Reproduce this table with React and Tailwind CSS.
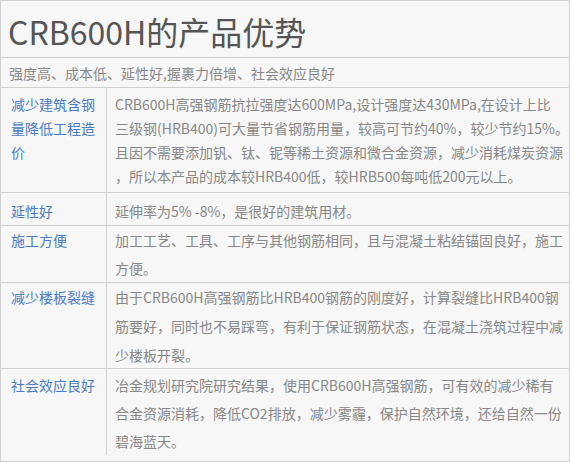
const rows = [
  {
    title: ['减少建筑含钢', '量降低工程造', '价'],
    lines: [
      'CRB600H高强钢筋抗拉强度达600MPa,设计强度达430MPa,在设计上比',
      '三级钢(HRB400)可大量节省钢筋用量，较高可节约40%，较少节约15%。',
      '且因不需要添加钒、钛、铌等稀土资源和微合金资源，减少消耗煤炭资源',
      '，所以本产品的成本较HRB400低，较HRB500每吨低200元以上。',
    ],
    row: 'h-[105px] border-b',
    lead: 'leading-[24px] pt-[4px]',
  },
  {
    title: ['延性好'],
    lines: ['延伸率为5% -8%，是很好的建筑用材。'],
    row: 'h-[33px] border-b',
    lead: 'leading-[28px] pt-[4px]',
  },
  {
    title: ['施工方便'],
    lines: ['加工工艺、工具、工序与其他钢筋相同，且与混凝土粘结锚固良好，施工', '方便。'],
    row: 'h-[57px] border-b',
    lead: 'leading-[28px] pt-0',
  },
  {
    title: ['减少楼板裂缝'],
    lines: [
      '由于CRB600H高强钢筋比HRB400钢筋的刚度好，计算裂缝比HRB400钢',
      '筋要好，同时也不易踩弯，有利于保证钢筋状态，在混凝土浇筑过程中减',
      '少楼板开裂。',
    ],
    row: 'h-[86px] border-b',
    lead: 'leading-[29px] pt-0',
  },
  {
    title: ['社会效应良好'],
    lines: [
      '冶金规划研究院研究结果，使用CRB600H高强钢筋，可有效的减少稀有',
      '合金资源消耗，降低CO2排放，减少雾霾，保护自然环境，还给自然一份',
      '碧海蓝天。',
    ],
    row: 'h-[84px]',
    lead: 'leading-[28px] pt-[2px]',
  },
];

export default function App() {
  return (
    <div
      className="w-[570px] h-[462px] border border-[#d0d0d0] bg-[#f7f7f7] overflow-hidden"
      style={{ fontFamily: '"Noto Sans CJK SC", "Liberation Sans", sans-serif' }}
    >
      <div className="h-[57px] border-b border-[#d0d0d0] pl-[7px] pt-[3px] text-[32px] leading-[54px] text-[#555555]">
        CRB600H的产品优势
      </div>
      <div className="h-[30px] border-b border-[#d0d0d0] pl-[8px] text-[14px] leading-[30px] text-[#888888]">
        强度高、成本低、延性好,握裹力倍增、社会效应良好
      </div>
      <div className="flex flex-col text-[14px]">
        {rows.map((r, i) => (
          <div key={i} className={`grid grid-cols-[106px_1fr] border-[#d0d0d0] ${r.row}`}>
            <div className={`border-r border-[#d0d0d0] pl-[10px] text-[#4a7cc7] ${r.lead}`}>
              {r.title.map((t) => (
                <div key={t} className="whitespace-nowrap">{t}</div>
              ))}
            </div>
            <div className={`pl-[8px] text-[#888888] ${r.lead}`}>
              {r.lines.map((t) => (
                <div key={t} className="whitespace-nowrap">{t}</div>
              ))}
            </div>
          </div>
        ))}
      </div>
    </div>
  );
}
